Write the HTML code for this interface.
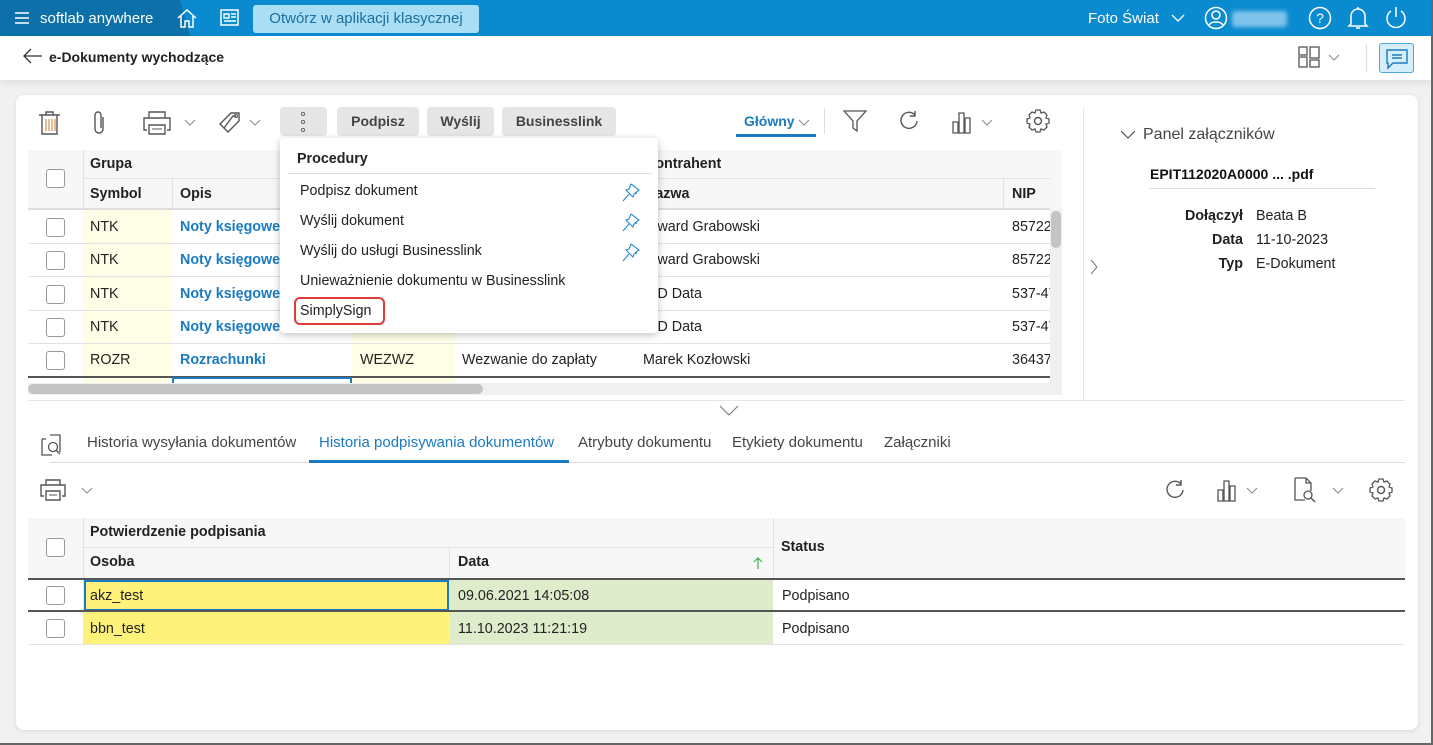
<!DOCTYPE html>
<html><head><meta charset="utf-8">
<style>
*{box-sizing:border-box;margin:0;padding:0}
body{width:1433px;height:745px;overflow:hidden;background:#f1f1f1;font-family:"Liberation Sans",Arial,sans-serif;font-size:14.3px;color:#222;position:relative}
.a{position:absolute}
.top{left:0;top:0;width:1433px;height:36px;background:#0a8bd0}
.topl{left:0;top:0;width:190px;height:36px;background:#0d70a8;clip-path:polygon(0 0,180px 0,190px 36px,0 36px)}
.sub{left:0;top:36px;width:1433px;height:44px;background:#fff;box-shadow:0 3px 8px rgba(0,0,0,.08)}
.card{left:16px;top:95px;width:1402px;height:635px;background:#fff;border-radius:8px;box-shadow:0 1px 4px rgba(0,0,0,.1)}
.btn{background:#e6e6e6;border-radius:4px;height:29px;top:107px;color:#444;font-weight:bold;font-size:14px;text-align:center;line-height:29px}
.hd{background:#f7f7f7}
.cb{width:19px;height:19px;border:1px solid #999;border-radius:3px;background:#fff}
.t{white-space:nowrap}
.blue{color:#1a7bc0}
.ln{height:1px;background:#e2e2e2}
.tab{font-size:15px}
</style></head><body>
<div class="a top"></div><div class="a topl"></div>
<svg class="a" style="left:14px;top:10px" width="16" height="16"><path d="M1 3h14M1 8h14M1 13h14" stroke="#fff" stroke-width="1.6"/></svg>
<div class="a t" style="left:40px;top:10px;color:#fff;font-size:15px">softlab anywhere</div>
<svg class="a" style="left:176px;top:7px" width="22" height="22"><path d="M2 11L11 3l9 8M5 9v11h4v-6h4v6h4V9" stroke="#fff" fill="none" stroke-width="1.5"/></svg>
<svg class="a" style="left:220px;top:9px" width="22" height="18"><rect x="1" y="1" width="17" height="15" stroke="#fff" fill="none" stroke-width="1.5"/><path d="M4 5h5v4H4zM11 5h5M11 8h5M4 12h12" stroke="#fff" stroke-width="1.4" fill="none"/></svg>
<div class="a t" style="left:253px;top:5px;width:226px;height:28px;background:#a9def5;border-radius:3px;color:#1b6f9e;font-size:15px;line-height:28px;text-align:center">Otwórz w aplikacji klasycznej</div>
<div class="a t" style="left:1088px;top:10px;color:#fff;font-size:15px">Foto Świat</div>
<svg class="a" style="left:1171px;top:14px" width="14" height="9"><path d="M1 1l6 6 6-6" stroke="#fff" fill="none" stroke-width="1.3"/></svg>
<svg class="a" style="left:1204px;top:6px" width="24" height="24"><circle cx="12" cy="12" r="10.5" stroke="#fff" fill="none" stroke-width="1.5"/><circle cx="12" cy="9" r="4" stroke="#fff" fill="none" stroke-width="1.5"/><path d="M5 19c2-4 12-4 14 0" stroke="#fff" fill="none" stroke-width="1.5"/></svg>
<div class="a" style="left:1232px;top:11px;width:55px;height:16px;background:#7fc3ea;border-radius:3px;filter:blur(2px)"></div>
<svg class="a" style="left:1308px;top:6px" width="24" height="24"><circle cx="12" cy="12" r="10.5" stroke="#fff" fill="none" stroke-width="1.5"/><text x="12" y="17" font-size="14" fill="#fff" text-anchor="middle" font-family="Liberation Sans">?</text></svg>
<svg class="a" style="left:1347px;top:5px" width="22" height="26"><path d="M4 19V11a7 7 0 0 1 14 0v8l2 2H2zM9 23h4M11 2v2" stroke="#fff" fill="none" stroke-width="1.5"/></svg>
<svg class="a" style="left:1384px;top:6px" width="24" height="24"><path d="M7 5a9 9 0 1 0 10 0M12 1v10" stroke="#fff" fill="none" stroke-width="1.5"/></svg>

<div class="a sub"></div>
<svg class="a" style="left:23px;top:48px" width="20" height="16"><path d="M19 8H2M8 1L1 8l7 7" stroke="#333" fill="none" stroke-width="1.3"/></svg>
<div class="a t" style="left:49px;top:49px;font-size:14px;font-weight:bold;color:#222">e-Dokumenty wychodzące</div>
<svg class="a" style="left:1298px;top:46px" width="24" height="22"><rect x="1" y="1" width="8" height="8" stroke="#555" fill="none" stroke-width="1.3"/><rect x="1" y="11" width="8" height="10" stroke="#555" fill="none" stroke-width="1.3"/><rect x="12" y="1" width="9" height="11" stroke="#555" fill="none" stroke-width="1.3"/><rect x="12" y="14" width="9" height="7" stroke="#555" fill="none" stroke-width="1.3"/></svg>
<svg class="a" style="left:1328px;top:54px" width="12" height="8"><path d="M1 1l5 5 5-5" stroke="#888" fill="none"/></svg>
<div class="a" style="left:1366px;top:44px;width:1px;height:28px;background:#ddd"></div>
<div class="a" style="left:1379px;top:43px;width:35px;height:30px;background:#d6eefa;border:1px solid #4aa8de;border-radius:3px"></div>
<svg class="a" style="left:1385px;top:48px" width="24" height="22"><path d="M2 2h20v13H8l-5 5v-5H2z" stroke="#1b7bbd" fill="none" stroke-width="1.4"/><path d="M7 7h10M7 10h10" stroke="#1b7bbd" stroke-width="1.4"/></svg>

<div class="a card"></div>
<svg class="a" style="left:38px;top:110px" width="24" height="26"><path d="M1 5h21M8 5V2h7v3M4 5v19h15V5" stroke="#555" fill="none" stroke-width="1.4"/><path d="M8 9v12M11 9v12M14 9v12M17 9v12" stroke="#c77a2c" stroke-width="1"/></svg>
<svg class="a" style="left:92px;top:110px" width="16" height="26"><path d="M11 7v12a4 4 0 0 1-8 0V5a3 3 0 0 1 6 0v13" stroke="#555" fill="none" stroke-width="1.4"/></svg>
<svg class="a" style="left:143px;top:110px" width="28" height="26"><path d="M6 8V2h16v6M4 20H1V8h26v12h-3M6 15h16v9H6z" stroke="#555" fill="none" stroke-width="1.4"/><path d="M9 19h10" stroke="#555"/></svg>
<svg class="a" style="left:184px;top:119px" width="12" height="8"><path d="M1 1l5 5 5-5" stroke="#888" fill="none"/></svg>
<svg class="a" style="left:218px;top:110px" width="26" height="26"><path d="M2 14L13 3h8v8L10 22z M6 18l9-12h3" stroke="#555" fill="none" stroke-width="1.4"/><circle cx="18" cy="6" r="1.5" stroke="#555" fill="none"/></svg>
<svg class="a" style="left:249px;top:119px" width="12" height="8"><path d="M1 1l5 5 5-5" stroke="#888" fill="none"/></svg>
<div class="a btn" style="left:280px;width:47px"></div>
<svg class="a" style="left:299px;top:111px" width="8" height="22"><circle cx="4" cy="3" r="1.6" stroke="#666" fill="none"/><circle cx="4" cy="11" r="1.6" stroke="#666" fill="none"/><circle cx="4" cy="19" r="1.6" stroke="#666" fill="none"/></svg>
<div class="a btn" style="left:337px;width:82px">Podpisz</div>
<div class="a btn" style="left:427px;width:67px">Wyślij</div>
<div class="a btn" style="left:502px;width:114px">Businesslink</div>
<div class="a t blue" style="left:744px;top:113px;font-weight:bold;font-size:14px">Główny</div>
<svg class="a" style="left:798px;top:119px" width="12" height="8"><path d="M1 1l5 5 5-5" stroke="#888" fill="none"/></svg>
<div class="a" style="left:736px;top:134px;width:80px;height:3px;background:#1a7bc0"></div>
<div class="a" style="left:824px;top:108px;width:1px;height:26px;background:#ddd"></div>
<svg class="a" style="left:843px;top:109px" width="24" height="24"><path d="M1 2h22l-9 10v10l-4-3v-7z" stroke="#555" fill="none" stroke-width="1.3"/></svg>
<svg class="a" style="left:898px;top:110px" width="22" height="22"><path d="M17 5a8 8 0 1 0 2 6M17 1v5h-5" stroke="#555" fill="none" stroke-width="1.4"/></svg>
<svg class="a" style="left:951px;top:110px" width="24" height="24"><path d="M2 12h5v11H2zM8 3h5v20H8zM14 8h5v15h-5z" stroke="#555" fill="none" stroke-width="1.3"/></svg>
<svg class="a" style="left:981px;top:119px" width="12" height="8"><path d="M1 1l5 5 5-5" stroke="#888" fill="none"/></svg>
<svg class="a" style="left:1026px;top:109px" width="24" height="24"><circle cx="12" cy="12" r="3.5" stroke="#555" fill="none" stroke-width="1.4"/><path d="M10 1h4l1 3 3-1 3 3-1 3 3 1v4l-3 1 1 3-3 3-3-1-1 3h-4l-1-3-3 1-3-3 1-3-3-1v-4l3-1-1-3 3-3 3 1z" stroke="#555" fill="none" stroke-width="1.3"/></svg>
<div class="a" style="left:1083px;top:108px;width:1px;height:292px;background:#e5e5e5"></div>

<div class="a hd" style="left:28px;top:150px;width:1034px;height:60px"></div>
<div class="a" style="left:83px;top:178px;width:967px;height:1px;background:#e2e2e2"></div>
<div class="a" style="left:83px;top:150px;width:1px;height:60px;background:#e2e2e2"></div>
<div class="a" style="left:172px;top:178px;width:1px;height:32px;background:#e2e2e2"></div>
<div class="a" style="left:1003px;top:178px;width:1px;height:32px;background:#e2e2e2"></div>
<div class="a" style="left:28px;top:208px;width:1022px;height:2px;background:#ddd"></div>
<div class="a cb" style="left:46px;top:169px"></div>
<div class="a t" style="left:90px;top:156px;font-weight:bold">Grupa</div>
<div class="a t" style="left:90px;top:186px;font-weight:bold">Symbol</div>
<div class="a t" style="left:180px;top:186px;font-weight:bold">Opis</div>
<div class="a t" style="left:645px;top:156px;font-weight:bold">Kontrahent</div>
<div class="a t" style="left:645px;top:186px;font-weight:bold">Nazwa</div>
<div class="a t" style="left:1012px;top:186px;font-weight:bold">NIP</div>
<div class="a" style="left:83px;top:210px;width:89px;height:173px;background:#fefee6"></div>
<div class="a" style="left:352px;top:210px;width:103px;height:173px;background:#fefee6"></div>
<div id="rows"></div>
<script>
var r=[["NTK","Noty księgowe","","","Edward Grabowski","85722"],["NTK","Noty księgowe","","","Edward Grabowski","85722"],["NTK","Noty księgowe","","","3BD Data","537-47"],["NTK","Noty księgowe","","","3BD Data","537-47"],["ROZR","Rozrachunki","WEZWZ","Wezwanie do zapłaty","Marek Kozłowski","36437"]];
var h="",ys=[210,243,277,310,343];
for(var i=0;i<5;i++){var y=ys[i];
h+='<div class="a cb" style="left:46px;top:'+(y+8)+'px"></div>';
h+='<div class="a t" style="left:90px;top:'+(y+9)+'px">'+r[i][0]+'</div>';
h+='<div class="a t blue" style="left:180px;top:'+(y+9)+'px;font-weight:bold">'+r[i][1]+'</div>';
h+='<div class="a t" style="left:360px;top:'+(y+9)+'px">'+r[i][2]+'</div>';
h+='<div class="a t" style="left:462px;top:'+(y+9)+'px">'+r[i][3]+'</div>';
h+='<div class="a t" style="left:'+(i<4?640:643)+'px;top:'+(y+9)+'px;width:340px;overflow:hidden">'+r[i][4]+'</div>';
h+='<div class="a t" style="left:1012px;top:'+(y+9)+'px;width:38px;overflow:hidden">'+r[i][5]+'</div>';
h+='<div class="a ln" style="left:28px;top:'+(y+33)+'px;width:1022px"></div>';}
document.getElementById("rows").innerHTML=h;
</script>
<div class="a" style="left:28px;top:376px;width:1022px;height:2px;background:#555"></div>
<div class="a" style="left:172px;top:377px;width:180px;height:6px;border:2px solid #1a7bc0;border-bottom:none"></div>
<div class="a" style="left:28px;top:383px;width:1034px;height:12px;background:#f0f0f0"></div>
<div class="a" style="left:28px;top:384px;width:455px;height:10px;background:#c4c4c4;border-radius:5px"></div>
<div class="a" style="left:1050px;top:210px;width:12px;height:185px;background:#f0f0f0"></div>
<div class="a" style="left:1051px;top:211px;width:10px;height:37px;background:#c4c4c4;border-radius:5px"></div>

<div class="a" style="left:280px;top:138px;width:378px;height:195px;background:#fff;border-radius:4px;box-shadow:0 2px 8px rgba(0,0,0,.25)"></div>
<div class="a t" style="left:297px;top:151px;font-weight:bold">Procedury</div>
<div class="a" style="left:288px;top:173px;width:364px;height:1px;background:#ddd"></div>
<div class="a t" style="left:300px;top:183px">Podpisz dokument</div>
<div class="a t" style="left:300px;top:213px">Wyślij dokument</div>
<div class="a t" style="left:300px;top:243px">Wyślij do usługi Businesslink</div>
<div class="a t" style="left:300px;top:273px">Unieważnienie dokumentu w Businesslink</div>
<div class="a" style="left:294px;top:297px;width:91px;height:28px;border:2px solid #e03a3a;border-radius:6px"></div>
<div class="a t" style="left:300px;top:303px">SimplySign</div>
<svg class="a" style="left:620px;top:181px" width="20" height="22"><path d="M3 20l6-7M11 3l8 6-4 3M11 3l-2 5 -3 1 7 7 1-3 3-1" stroke="#2a8ad0" fill="none" stroke-width="1.1"/></svg>
<svg class="a" style="left:620px;top:211px" width="20" height="22"><path d="M3 20l6-7M11 3l8 6-4 3M11 3l-2 5 -3 1 7 7 1-3 3-1" stroke="#2a8ad0" fill="none" stroke-width="1.1"/></svg>
<svg class="a" style="left:620px;top:241px" width="20" height="22"><path d="M3 20l6-7M11 3l8 6-4 3M11 3l-2 5 -3 1 7 7 1-3 3-1" stroke="#2a8ad0" fill="none" stroke-width="1.1"/></svg>

<svg class="a" style="left:1120px;top:130px" width="16" height="10"><path d="M1 1l7 7 7-7" stroke="#555" fill="none" stroke-width="1.2"/></svg>
<div class="a t" style="left:1143px;top:126px;font-size:16px;color:#444">Panel załączników</div>
<div class="a t" style="left:1150px;top:166px;font-weight:bold;font-size:14px;color:#111">EPIT112020A0000 ... .pdf</div>
<div class="a" style="left:1149px;top:188px;width:226px;height:1px;background:#ddd"></div>
<div class="a t" style="left:1150px;top:208px;width:93px;text-align:right;font-weight:bold">Dołączył</div>
<div class="a t" style="left:1256px;top:208px">Beata B</div>
<div class="a t" style="left:1150px;top:232px;width:93px;text-align:right;font-weight:bold">Data</div>
<div class="a t" style="left:1256px;top:232px">11-10-2023</div>
<div class="a t" style="left:1150px;top:256px;width:93px;text-align:right;font-weight:bold">Typ</div>
<div class="a t" style="left:1256px;top:256px">E-Dokument</div>
<svg class="a" style="left:1090px;top:259px" width="8" height="16"><path d="M1 1l6 7-6 7" stroke="#777" fill="none"/></svg>

<div class="a" style="left:28px;top:400px;width:1377px;height:1px;background:#e5e5e5"></div>
<svg class="a" style="left:719px;top:405px" width="20" height="12"><path d="M1 1l9 9 9-9" stroke="#777" fill="none" stroke-width="1.1"/></svg>

<svg class="a" style="left:40px;top:433px" width="24" height="24"><path d="M10 2h10v17M2 6v16h10M2 6h4" stroke="#555" fill="none" stroke-width="1.3"/><circle cx="13" cy="14" r="4.5" stroke="#555" fill="none" stroke-width="1.3"/><path d="M16 17l4 4" stroke="#555" stroke-width="1.5"/></svg>
<div class="a" style="left:50px;top:462px;width:1355px;height:1px;background:#ddd"></div>
<div class="a t tab" style="left:87px;top:434px;color:#444">Historia wysyłania dokumentów</div>
<div class="a t tab blue" style="left:319px;top:434px">Historia podpisywania dokumentów</div>
<div class="a" style="left:309px;top:460px;width:260px;height:3px;background:#1a7bc0"></div>
<div class="a t tab" style="left:578px;top:434px;color:#444">Atrybuty dokumentu</div>
<div class="a t tab" style="left:732px;top:434px;color:#444">Etykiety dokumentu</div>
<div class="a t tab" style="left:884px;top:434px;color:#444">Załączniki</div>

<svg class="a" style="left:40px;top:478px" width="26" height="24"><path d="M6 7V2h14v5M4 18H1V7h24v11h-3M6 13h14v9H6z" stroke="#555" fill="none" stroke-width="1.4"/><path d="M9 17h8" stroke="#555"/></svg>
<svg class="a" style="left:81px;top:487px" width="12" height="8"><path d="M1 1l5 5 5-5" stroke="#888" fill="none"/></svg>
<svg class="a" style="left:1164px;top:479px" width="22" height="22"><path d="M17 5a8 8 0 1 0 2 6M17 1v5h-5" stroke="#555" fill="none" stroke-width="1.4"/></svg>
<svg class="a" style="left:1216px;top:478px" width="24" height="24"><path d="M2 12h5v11H2zM8 3h5v20H8zM14 8h5v15h-5z" stroke="#555" fill="none" stroke-width="1.3"/></svg>
<svg class="a" style="left:1246px;top:487px" width="12" height="8"><path d="M1 1l5 5 5-5" stroke="#888" fill="none"/></svg>
<svg class="a" style="left:1293px;top:477px" width="26" height="26"><path d="M2 1h11l5 5v8M13 1v5h5M2 1v22h10" stroke="#555" fill="none" stroke-width="1.3"/><circle cx="15" cy="18" r="4" stroke="#555" fill="none" stroke-width="1.3"/><path d="M18 21l4 4" stroke="#555" stroke-width="1.5"/></svg>
<svg class="a" style="left:1332px;top:487px" width="12" height="8"><path d="M1 1l5 5 5-5" stroke="#888" fill="none"/></svg>
<svg class="a" style="left:1369px;top:478px" width="24" height="24"><circle cx="12" cy="12" r="3.5" stroke="#555" fill="none" stroke-width="1.4"/><path d="M10 1h4l1 3 3-1 3 3-1 3 3 1v4l-3 1 1 3-3 3-3-1-1 3h-4l-1-3-3 1-3-3 1-3-3-1v-4l3-1-1-3 3-3 3 1z" stroke="#555" fill="none" stroke-width="1.3"/></svg>

<div class="a hd" style="left:28px;top:518px;width:1377px;height:61px"></div>
<div class="a" style="left:83px;top:518px;width:1px;height:61px;background:#e2e2e2"></div>
<div class="a" style="left:773px;top:518px;width:1px;height:61px;background:#e2e2e2"></div>
<div class="a" style="left:449px;top:547px;width:1px;height:32px;background:#e2e2e2"></div>
<div class="a" style="left:83px;top:547px;width:690px;height:1px;background:#e2e2e2"></div>
<div class="a cb" style="left:46px;top:538px"></div>
<div class="a t" style="left:90px;top:524px;font-weight:bold">Potwierdzenie podpisania</div>
<div class="a t" style="left:90px;top:554px;font-weight:bold">Osoba</div>
<div class="a t" style="left:458px;top:554px;font-weight:bold">Data</div>
<svg class="a" style="left:753px;top:556px" width="10" height="14"><path d="M5 13V2M1 6l4-4 4 4" stroke="#3bb44a" fill="none" stroke-width="1.2"/></svg>
<div class="a t" style="left:781px;top:539px;font-weight:bold">Status</div>
<div class="a" style="left:28px;top:578px;width:1377px;height:2px;background:#555"></div>
<div class="a" style="left:83px;top:580px;width:366px;height:65px;background:#fff27a"></div>
<div class="a" style="left:449px;top:580px;width:324px;height:65px;background:#dfeccb"></div>
<div class="a" style="left:84px;top:580px;width:365px;height:31px;border:2px solid #1a7bc0"></div>
<div class="a" style="left:28px;top:610px;width:1377px;height:2px;background:#555"></div>
<div class="a ln" style="left:28px;top:644px;width:1377px"></div>
<div class="a cb" style="left:46px;top:586px"></div>
<div class="a cb" style="left:46px;top:619px"></div>
<div class="a t" style="left:90px;top:588px">akz_test</div>
<div class="a t" style="left:458px;top:588px">09.06.2021 14:05:08</div>
<div class="a t" style="left:782px;top:588px">Podpisano</div>
<div class="a t" style="left:90px;top:621px">bbn_test</div>
<div class="a t" style="left:458px;top:621px">11.10.2023 11:21:19</div>
<div class="a t" style="left:782px;top:621px">Podpisano</div>

<div class="a" style="left:0;top:743px;width:1433px;height:2px;background:#666"></div>
<div class="a" style="left:1431px;top:0;width:2px;height:745px;background:#666"></div>
</body></html>
